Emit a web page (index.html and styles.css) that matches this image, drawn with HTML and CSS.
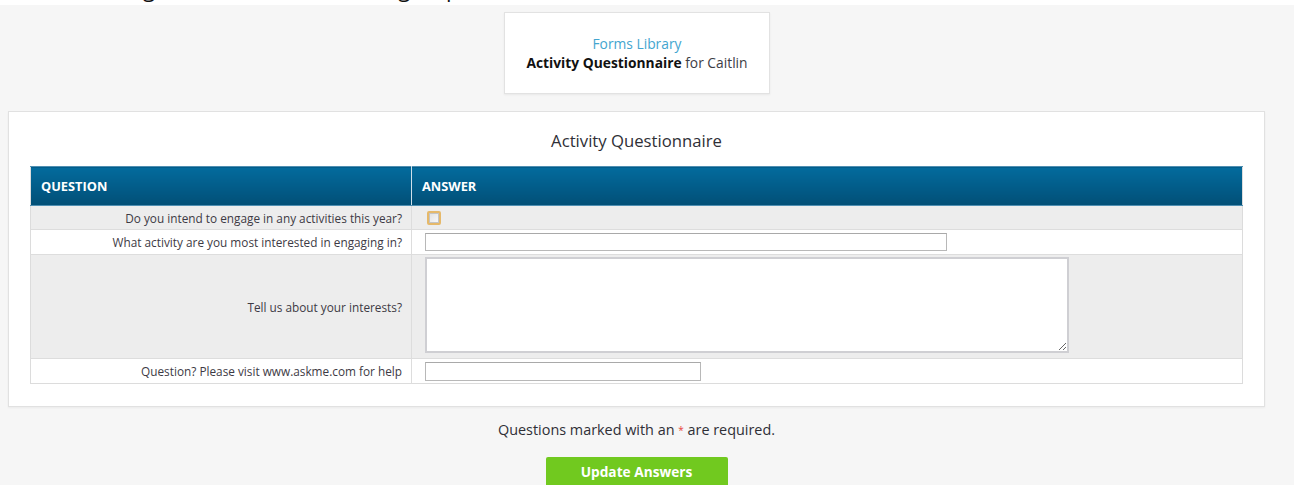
FILE: index.html
```html
<!DOCTYPE html>
<html lang="en">
<head>
<meta charset="utf-8">
<title>Activity Questionnaire</title>
<link rel="stylesheet" href="styles.css">
</head>
<body>
<div class="topline"><h1 class="page-heading">Reviewing the last answers of the group</h1></div>
<div class="page">
  <div class="crumb-card">
    <a class="crumb-link" href="#">Forms Library</a>
    <div class="crumb-title"><strong>Activity Questionnaire</strong> for Caitlin</div>
  </div>

  <form class="panel">
    <h2 class="panel-title">Activity Questionnaire</h2>
    <table class="qa-table">
      <thead>
        <tr><th class="col-q">QUESTION</th><th class="col-a">ANSWER</th></tr>
      </thead>
      <tbody>
        <tr class="odd row-check">
          <td class="q">Do you intend to engage in any activities this year?</td>
          <td class="a"><span class="check"></span></td>
        </tr>
        <tr class="even">
          <td class="q">What activity are you most interested in engaging in?</td>
          <td class="a"><input class="field field-wide" type="text"></td>
        </tr>
        <tr class="odd row-area">
          <td class="q">Tell us about your interests?</td>
          <td class="a a-top"><textarea class="field area"></textarea></td>
        </tr>
        <tr class="even">
          <td class="q">Question? Please visit www.askme.com for help</td>
          <td class="a"><input class="field field-short" type="text"></td>
        </tr>
      </tbody>
    </table>
  </form>

  <p class="note">Questions marked with an <span class="req">*</span> are required.</p>
  <div class="actions"><button class="btn-update" type="button">Update Answers</button></div>
</div>
</body>
</html>
```
FILE: styles.css
```css
html, body {
  margin: 0;
  padding: 0;
}

body {
  background: #f6f6f6;
  font-family: "Open Sans", "Noto Sans", Arial, sans-serif;
  color: #333;
  overflow: hidden;
}

/* white strip with the clipped page heading */
.topline {
  height: 5px;
  background: #fff;
  overflow: hidden;
}

.page-heading {
  margin: -27px 0 0 52px;
  font-size: 22px;
  font-weight: 400;
  line-height: 30px;
  color: #111;
  white-space: nowrap;
}

.page {
  width: 1257px;
  margin-left: 8px;
  padding-top: 7px;
}

/* breadcrumb card */
.crumb-card {
  width: 222px;
  margin-left: 496px;
  padding: 21px 21px 21px;
  background: #fff;
  border: 1px solid #e2e2e2;
  box-shadow: 0 1px 2px rgba(0, 0, 0, 0.06);
  text-align: center;
  font-size: 13.8px;
  line-height: 19px;
}

.crumb-link {
  color: #43a5cf;
  text-decoration: none;
}

.crumb-title {
  color: #3d3d45;
  white-space: nowrap;
}

.crumb-title strong {
  color: #111;
  font-weight: 700;
}

/* form panel */
.panel {
  margin-top: 17px;
  padding: 18px 21px 22px;
  background: #fff;
  border: 1px solid #e1e1e1;
  box-shadow: 0 1px 2px rgba(0, 0, 0, 0.05);
}

.panel-title {
  margin: 0 0 14px;
  font-size: 16.7px;
  font-weight: 400;
  line-height: 22px;
  text-align: center;
  color: #2f2f36;
}

.qa-table {
  width: 100%;
  border-collapse: collapse;
  border: 1px solid #dcdcdc;
  font-size: 11.8px;
}

.qa-table th {
  height: 39px;
  padding: 0 10px;
  box-sizing: border-box;
  background: linear-gradient(to bottom, #036b9d 0%, #025a86 60%, #024f76 100%);
  color: #fff;
  font-size: 12.8px;
  font-weight: 700;
  text-align: left;
  border-top: 1px solid #4f8fb2;
  border-bottom: 1px solid #4f8fb2;
}

.qa-table th.col-q {
  width: 381px;
  border-right: 1px solid #cfe0ea;
}

.qa-table td {
  padding: 0;
  border-top: 1px solid #dddddd;
  color: #3d3a44;
}

.qa-table td.q {
  padding-right: 9px;
  text-align: right;
  border-right: 1px solid #dddddd;
}

.qa-table td.a {
  padding-left: 13px;
}

.qa-table td.a-top {
  vertical-align: top;
  padding-top: 2px;
}

.qa-table tr.odd td {
  background: #ededed;
}

.qa-table tr.even td {
  background: #fff;
}

.qa-table tbody tr {
  height: 24px;
}

.qa-table tbody tr.even {
  height: 25px;
}

.qa-table tr.row-area {
  height: 104px;
}

/* checkbox */
.check {
  display: block;
  width: 10px;
  height: 10px;
  margin-left: 2px;
  border: 2px solid #e6b96a;
  border-radius: 2px;
  background: linear-gradient(135deg, #e0e0e0, #fafafa);
  box-shadow: inset 0 0 0 1px #c4c4c4;
}

.field {
  display: block;
  box-sizing: border-box;
  margin: 0;
  padding: 0 4px;
  border: 1px solid #b8b8b8;
  border-top-color: #a9a9a9;
  background: #fff;
  font-family: inherit;
  font-size: 12px;
  outline: none;
}

.field-wide {
  width: 522px;
  height: 18px;
}

.field-short {
  width: 276px;
  height: 19px;
}

.area {
  width: 644px;
  height: 96px;
  resize: both;
  border: 2px solid #cfcfd3;
}

/* footer */
.note {
  margin: 13px 0 0;
  font-size: 14.4px;
  line-height: 20px;
  text-align: center;
  color: #2f2f36;
}

.req {
  color: #e8423a;
  font-size: 10px;
  vertical-align: 1px;
}

.actions {
  margin-top: 17px;
  text-align: center;
}

.btn-update {
  width: 182px;
  height: 32px;
  border: 0;
  border-radius: 2px;
  background: #71c91f;
  color: #fff;
  font-family: inherit;
  font-size: 13.7px;
  font-weight: 700;
  padding: 0 0 4px;
}
```
